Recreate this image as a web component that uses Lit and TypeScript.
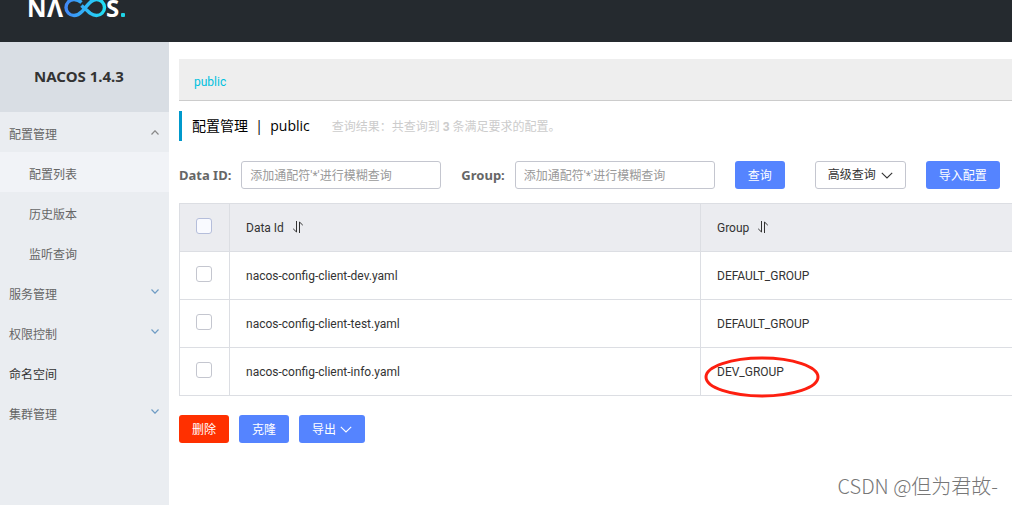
import { LitElement, html, css, svg } from "lit";
import { customElement, property } from "lit/decorators.js";

const chevron = (up = false) => svg`
  <svg class="chev" viewBox="0 0 8 5" width="8" height="5" aria-hidden="true">
    <path d=${up ? "M0.5 4.5 4 0.8 7.5 4.5" : "M0.5 0.5 4 4.2 7.5 0.5"} fill="none" stroke="currentColor" stroke-width="1.2" />
  </svg>`;

const arrow = svg`
  <svg viewBox="0 0 12 7" width="12" height="7" aria-hidden="true">
    <path d="M0.8 0.8 6 6 11.2 0.8" fill="none" stroke="currentColor" stroke-width="1.1" />
  </svg>`;

const sortIcon = svg`
  <svg viewBox="0 0 12 14" width="12" height="14" aria-hidden="true">
    <path d="M4.5 1V12L1.200 8.800M7.500 13V2L10.800 5.200" fill="none" stroke="currentColor" />
  </svg>`;

interface Item {
  label: string;
  kind: "open" | "closed" | "link" | "sub" | "current";
}

@customElement("nacos-logo")
export class NacosLogo extends LitElement {
  static styles = css`
    :host { display: block; }
    svg { display: block; overflow: visible; }
    .word { font: 700 24px "Noto Sans", sans-serif; fill: #fff; }
  `;
  render() {
    return html`<svg width="98" height="24" viewBox="0 0 98 24" role="img" aria-label="NACOS.">
      <defs>
        <linearGradient id="g" x1="37" x2="77" gradientUnits="userSpaceOnUse">
          <stop offset="0" stop-color="#4286f8" />
          <stop offset="1" stop-color="#1fe0f4" />
        </linearGradient>
      </defs>
      <text class="word" x="-1" y="17">N</text>
      <text class="word" x="19" y="17">Λ</text>
      <path d="M53.500 2.500C51 .3 48.500 -.5 46 -.5a8 8 0 0 0 0 16c3 0 5.500-1.500 8-4M53.500 5.500l2.500 2.500M54 11.500C58.500 7 62-.5 68.500-.5a8 8 0 0 1 0 16C64 15.500 61 12.500 56 7.500" fill="none" stroke="url(#g)" stroke-width="3.400" />
      <text class="word" x="78" y="17">S</text>
      <rect x="93" y="13" width="4" height="4" rx="1" fill="#1fd3e6" />
    </svg>`;
  }
}

@customElement("side-menu")
export class SideMenu extends LitElement {
  @property({ attribute: false }) items: Item[] = [];
  static styles = css`
    :host { display: block; background: #eaedf1; }
    .title {
      margin: 0; height: 70px; line-height: 68px; padding-right: 11px; box-sizing: border-box;
      background: #d9dee4; color: #333; text-align: center; font-size: 15px; font-weight: 700;
      font-family: "Noto Sans", sans-serif;
    }
    ul { list-style: none; margin: 0; padding: 0; }
    a {
      display: flex; align-items: center; justify-content: space-between;
      height: 40px; padding: 6px 10px 0 9px; box-sizing: border-box;
      color: #666; text-decoration: none;
    }
    .sub, .current { padding-left: 29px; }
    .current { background: #f1f3f7; }
    .link { color: #333; }
    svg { color: #6f9cc4; margin-bottom: 7px; }
    .open svg { color: #888; margin-bottom: 5px; }
  `;
  render() {
    return html`<h1 class="title">NACOS 1.4.3</h1>
      <nav><ul>${this.items.map((i) => html`<li>
        <a class=${i.kind} href="#">${i.label}${i.kind === "open" || i.kind === "closed" ? chevron(i.kind === "open") : ""}</a>
      </li>`)}</ul></nav>`;
  }
}

@customElement("app-root")
export class AppRoot extends LitElement {
  private menu: Item[] = [
    { label: "配置管理", kind: "open" },
    { label: "配置列表", kind: "current" },
    { label: "历史版本", kind: "sub" },
    { label: "监听查询", kind: "sub" },
    { label: "服务管理", kind: "closed" },
    { label: "权限控制", kind: "closed" },
    { label: "命名空间", kind: "link" },
    { label: "集群管理", kind: "closed" },
  ];
  private rows = [
    { id: "nacos-config-client-dev.yaml", group: "DEFAULT_GROUP" },
    { id: "nacos-config-client-test.yaml", group: "DEFAULT_GROUP" },
    { id: "nacos-config-client-info.yaml", group: "DEV_GROUP", marked: true },
  ];

  static styles = css`
    :host {
      display: flex; flex-direction: column; min-height: 100vh; position: relative;
      background: #fff; color: #333;
      font: 12px/18px Roboto, "Noto Sans CJK SC", sans-serif;
    }
    * { box-sizing: border-box; }
    header { height: 42px; padding-left: 28px; background: #252a2f; }
    .body { flex: 1; display: grid; grid-template-columns: 169px minmax(0, 1fr); }
    main { padding: 17px 0 0 10px; }
    .spaces { height: 42px; padding: 14px 15px 0; background: #eee; border-bottom: 1px solid #ccc; }
    .spaces a { color: #00c1de; text-decoration: none; }
    .heading { display: flex; align-items: center; height: 30px; margin: 10px 0 20px; padding-left: 10px; border-left: 3px solid #09c; }
    h2 { margin: 0; font: 400 14px/18px "Open Sans", "Noto Sans CJK SC", sans-serif; color: #000; white-space: pre; }
    .count { margin-left: 22px; padding-top: 2px; color: #ccc; }
    form { display: flex; align-items: center; height: 28px; margin-bottom: 14px; }
    label { font: 700 13px/18px "Noto Sans", sans-serif; color: #666; margin-right: 10px; }
    input, button { font: inherit; }
    input[type="text"] { width: 200px; height: 28px; margin-right: 20px; padding: 2px 8px 0; border: 1px solid #c4c6cf; border-radius: 3px; color: #333; outline: none; }
    input::placeholder { color: #999; opacity: 1; }
    button {
      display: flex; align-items: center; gap: 4px; height: 28px; padding: 2px 13px 0;
      border: 0; border-radius: 3px; background: #5584ff; color: #fff; white-space: nowrap;
    }
    button svg { margin-bottom: 2px; }
    .advanced { gap: 5px; margin: 0 20px 0 30px; padding: 0 12px; background: #fff; color: #333; border: 1px solid #c4c6cf; }
    .advanced svg { margin-bottom: 0; }
    .danger { background: #ff3000; }
    table { width: 100%; table-layout: fixed; border-collapse: collapse; border: 1px solid #dcdee3; border-right: 0; }
    th, td { height: 48px; padding: 0 16px; border: 1px solid #dcdee3; border-right: 0; text-align: left; font-weight: 400; }
    th { background: #ebecf0; }
    .pick { width: 50px; }
    .id { width: 471px; }
    .sort { display: flex; align-items: center; gap: 8px; }
    .sort svg { margin-bottom: 2px; }
    input[type="checkbox"] { display: block; appearance: none; width: 16px; height: 16px; margin: 0 0 3px; border: 1px solid #c4c6cf; border-radius: 3px; background: #fff; }
    th input[type="checkbox"] { background: #f9faff; border-color: #b5bedb; }
    .group { position: relative; }
    .ring { position: absolute; left: 3px; top: 8px; }
    .actions { display: flex; gap: 10px; padding-top: 19px; }
    .mark { position: absolute; right: 14px; bottom: 4px; font: 300 20px/30px "Noto Sans CJK SC", sans-serif; color: #777; }
  `;

  render() {
    return html`
      <header><nacos-logo></nacos-logo></header>
      <div class="body">
        <side-menu .items=${this.menu}></side-menu>
        <main>
          <div class="spaces"><a href="#">public</a></div>
          <div class="heading">
            <h2>配置管理  |  public</h2>
            <span class="count">查询结果：共查询到 <b>3</b> 条满足要求的配置。</span>
          </div>
          <form @submit=${(e: Event) => e.preventDefault()}>
            <label for="did">Data ID:</label>
            <input id="did" type="text" placeholder="添加通配符'*'进行模糊查询" />
            <label for="grp">Group:</label>
            <input id="grp" type="text" placeholder="添加通配符'*'进行模糊查询" />
            <button>查询</button>
            <button type="button" class="advanced">高级查询 ${arrow}</button>
            <button type="button">导入配置</button>
          </form>
          <table>
            <thead><tr>
              <th class="pick"><input type="checkbox" aria-label="全选" /></th>
              <th class="id"><span class="sort">Data Id ${sortIcon}</span></th>
              <th><span class="sort">Group ${sortIcon}</span></th>
            </tr></thead>
            <tbody>${this.rows.map((r) => html`<tr>
              <td><input type="checkbox" aria-label=${r.id} /></td>
              <td>${r.id}</td>
              <td class="group">${r.group}${r.marked ? svg`
                <svg class="ring" width="116" height="42" viewBox="0 0 116 42" aria-hidden="true">
                  <ellipse cx="58" cy="21" rx="56" ry="19" fill="none" stroke="#fd1f10" stroke-width="3" />
                </svg>` : ""}</td>
            </tr>`)}</tbody>
          </table>
          <div class="actions">
            <button class="danger">删除</button>
            <button>克隆</button>
            <button>导出 ${arrow}</button>
          </div>
        </main>
      </div>
      <div class="mark">CSDN @但为君故-</div>`;
  }
}
